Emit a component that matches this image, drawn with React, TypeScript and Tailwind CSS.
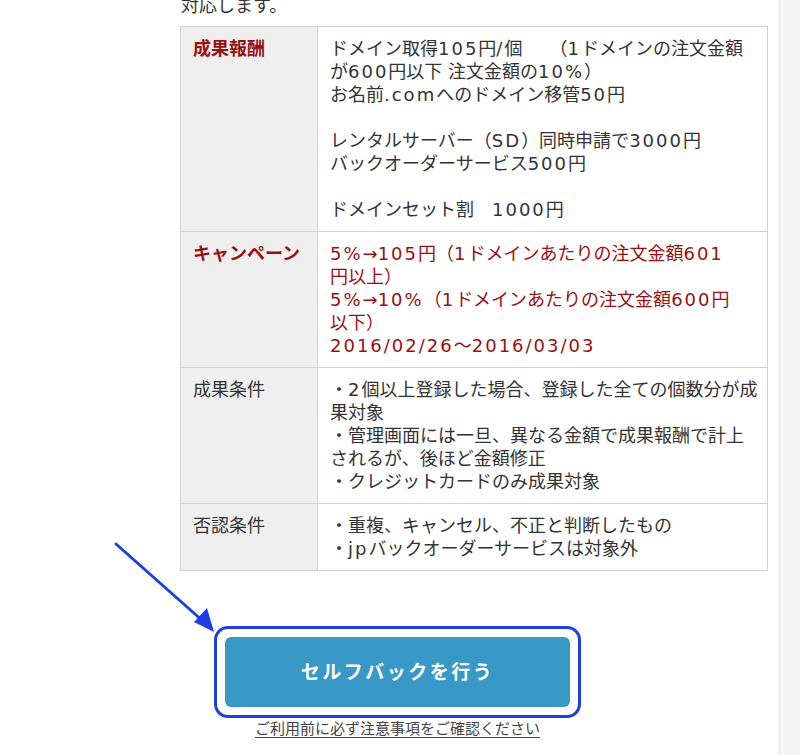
const rows = [
  {
    label: "成果報酬",
    red: true,
    lines: [
      "ドメイン取得105円/個　　（1ドメインの注文金額",
      "が600円以下\u00a0注文金額の10%）",
      "お名前.comへのドメイン移管50円",
      "",
      "レンタルサーバー（SD）同時申請で3000円",
      "バックオーダーサービス500円",
      "",
      "ドメインセット割　1000円",
    ],
    redBody: false,
  },
  {
    label: "キャンペーン",
    red: true,
    lines: [
      "5%→105円（1ドメインあたりの注文金額601",
      "円以上）",
      "5%→10%（1ドメインあたりの注文金額600円",
      "以下）",
      "2016/02/26〜2016/03/03",
    ],
    redBody: true,
  },
  {
    label: "成果条件",
    red: false,
    lines: [
      "・2個以上登録した場合、登録した全ての個数分が成",
      "果対象",
      "・管理画面には一旦、異なる金額で成果報酬で計上",
      "されるが、後ほど金額修正",
      "・クレジットカードのみ成果対象",
    ],
    redBody: false,
  },
  {
    label: "否認条件",
    red: false,
    lines: ["・重複、キャンセル、不正と判断したもの", "・jpバックオーダーサービスは対象外"],
    redBody: false,
  },
];

// latin runs get a little extra room, like the wide latin of the original font
function Line({ text }: { text: string }) {
  const parts = text.split(/([!-~]+)/);
  return (
    <>
      {parts.map((p, i) =>
        i % 2 === 1 ? (
          <span key={i} className="tracking-[2px]">
            {p}
          </span>
        ) : (
          <span key={i}>{p}</span>
        )
      )}
    </>
  );
}

export default function App() {
  return (
    <div
      className="flex w-[800px] h-[755px] overflow-hidden bg-[#f4f4f4] text-[#333]"
      style={{ fontFamily: '"DejaVu Sans", "Noto Sans CJK JP", sans-serif' }}
    >
      <main className="relative w-[780px] shrink-0 bg-white border-r border-[#e2e2e2]">
        <p className="ml-[181px] mt-[-6px] text-[18px] leading-[23px]">対応します。</p>

        <table className="ml-[180px] mt-[9px] w-[588px] border-collapse text-[18px] leading-[23px]">
          <tbody>
            {rows.map((row) => (
              <tr key={row.label}>
                <th
                  className={`w-[137px] border border-[#d0d0d0] bg-[#efefef] pl-[12px] pr-1 pt-[10px] pb-[10px] text-left align-top ${
                    row.red ? "font-bold text-[#9a0f10]" : "font-normal text-[#333]"
                  }`}
                >
                  {row.label}
                </th>
                <td
                  className={`border border-[#d0d0d0] pl-[12px] pr-2 pt-[10px] pb-[10px] align-top whitespace-nowrap ${
                    row.redBody ? "text-[#9a0f10]" : "text-[#333]"
                  }`}
                >
                  {row.lines.map((line, i) => (
                    <div key={i} className="h-[23px]">
                      <Line text={line} />
                    </div>
                  ))}
                </td>
              </tr>
            ))}
          </tbody>
        </table>

        <div className="mt-[55px] flex flex-col items-center pl-[16px]">
          <div className="rounded-[14px] border-[3px] border-[#1d3fe3] p-[8px]">
            <button className="w-[345px] h-[70px] rounded-[6px] bg-[#3899c6] text-[19px] font-semibold tracking-[2.5px] text-white">
              セルフバックを行う
            </button>
          </div>
          <a className="mt-[1px] text-[15px] leading-[20px] text-[#444] underline underline-offset-[3px]">
            ご利用前に必ず注意事項をご確認ください
          </a>
        </div>

        <svg className="absolute left-[110px] top-[538px]" width="110" height="100" viewBox="110 538 110 100">
          <line x1="116" y1="544" x2="204" y2="622" stroke="#1d3fe3" strokeWidth="3" strokeLinecap="round" />
          <polygon points="214,632 194,622 207,608" fill="#1d3fe3" />
        </svg>
      </main>
      <aside className="flex-1" />
    </div>
  );
}
